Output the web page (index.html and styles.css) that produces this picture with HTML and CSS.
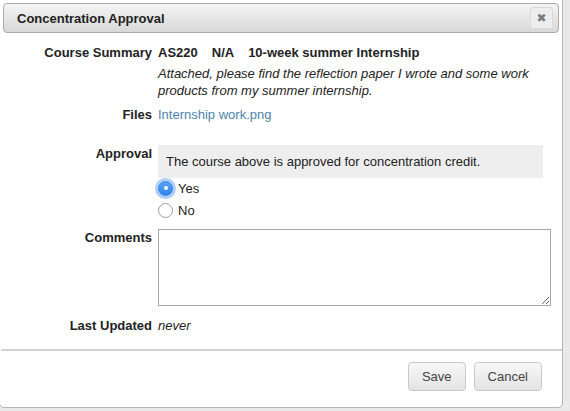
FILE: index.html
```html
<!DOCTYPE html>
<html>
<head>
<meta charset="utf-8">
<link rel="stylesheet" href="styles.css">
</head>
<body>
<div class="dialog">
  <div class="titlebar">
    <span class="title">Concentration Approval</span>
    <button class="close" type="button">&#10006;</button>
  </div>
  <div class="content">
    <div class="row r-summary">
      <div class="label">Course Summary</div>
      <div class="value">
        <div class="course"><span>AS220</span><span>N/A</span><span>10-week summer Internship</span></div>
        <div class="desc">Attached, please find the reflection paper I wrote and some work products from my summer internship.</div>
      </div>
    </div>
    <div class="row r-files">
      <div class="label">Files</div>
      <div class="value"><a class="file" href="#">Internship work.png</a></div>
    </div>
    <div class="row r-approval">
      <div class="label">Approval</div>
      <div class="value">
        <div class="notice">The course above is approved for concentration credit.</div>
        <div class="radios">
          <label class="radio"><span class="dot on"></span>Yes</label>
          <label class="radio"><span class="dot"></span>No</label>
        </div>
      </div>
    </div>
    <div class="row r-comments">
      <div class="label">Comments</div>
      <div class="value"><textarea class="comments"></textarea></div>
    </div>
    <div class="row r-updated">
      <div class="label">Last Updated</div>
      <div class="value"><em>never</em></div>
    </div>
  </div>
  <div class="footer">
    <button class="btn" type="button">Save</button>
    <button class="btn" type="button">Cancel</button>
  </div>
</div>
</body>
</html>
```
FILE: styles.css
```css
html, body {
  margin: 0;
  padding: 0;
}
body {
  background: #e9e9e9;
  font-family: "Liberation Sans", Arial, sans-serif;
  font-size: 13px;
  color: #222;
  width: 570px;
  height: 411px;
  overflow: hidden;
}
.dialog {
  box-sizing: border-box;
  width: 564px;
  height: 409px;
  margin-top: -1px;
  margin-left: -1px;
  background: #fff;
  border: 1px solid #b5b5b5;
  border-radius: 0 0 5px 5px;
  padding: 3px 2px 0 3px;
  display: flex;
  flex-direction: column;
}
.titlebar {
  box-sizing: border-box;
  height: 30px;
  margin-right: 1px;
  border: 1px solid #aaa;
  border-radius: 4px;
  background: linear-gradient(#f4f4f4, #d8d8d8);
  display: flex;
  align-items: center;
  justify-content: space-between;
  padding: 0 5px 0 13px;
}
.title {
  font-weight: bold;
  font-size: 13px;
  color: #222;
}
.close {
  box-sizing: border-box;
  width: 23px;
  height: 22px;
  border: 1px solid #d9d9d9;
  border-radius: 3px;
  background: #ededed;
  color: #7a7a7a;
  font-size: 12px;
  line-height: 20px;
  padding: 0;
  text-align: center;
  font-family: "DejaVu Sans", sans-serif;
  font-weight: bold;
}
.content {
  padding-top: 11px;
  flex: 1;
}
.row {
  display: grid;
  grid-template-columns: 149px 1fr;
  column-gap: 6px;
  line-height: 17px;
}
.label {
  text-align: right;
  font-weight: bold;
  color: #222;
}
.value {
  padding-right: 14px;
}
.course {
  font-weight: bold;
  display: flex;
  gap: 14px;
}
.desc {
  font-style: italic;
  margin-top: 4px;
}
.r-files {
  margin-top: 7px;
}
.file {
  color: #4f82ab;
  text-decoration: none;
}
.r-approval {
  margin-top: 22px;
}
.notice {
  background: #eeeeee;
  height: 33px;
  line-height: 33px;
  padding-left: 8px;
  margin-right: 3px;
}
.radios {
  display: flex;
  flex-direction: column;
  gap: 2px;
}
.radio {
  display: flex;
  align-items: center;
  height: 20px;
  gap: 5px;
  font-size: 13px;
}
.dot {
  box-sizing: border-box;
  width: 15px;
  height: 15px;
  border-radius: 50%;
  border: 1px solid #9a9a9a;
  background: #fff;
  position: relative;
}
.dot.on {
  border: 1px solid #2a78e4;
  background: linear-gradient(#5aa3f7, #2e84ee);
  box-shadow: 0 0 0 3px rgba(110, 165, 240, 0.55);
}
.dot.on::after {
  content: "";
  position: absolute;
  left: 4.5px;
  top: 4.5px;
  width: 4px;
  height: 4px;
  border-radius: 50%;
  background: #fff;
}
.r-comments {
  margin-top: 9px;
}
.comments {
  display: block;
  box-sizing: border-box;
  width: 393px;
  height: 77px;
  border: 1px solid #a6a6a6;
  margin: 0;
  padding: 2px;
  font-family: inherit;
}
.r-updated {
  margin-top: 11px;
}
.r-updated em {
  font-style: italic;
}
.footer {
  border-top: 2px solid #d4d4d4;
  margin-left: -2px;
  margin-right: -2px;
  height: 58px;
  box-sizing: border-box;
  display: flex;
  justify-content: flex-end;
  align-items: flex-start;
  gap: 8px;
  padding: 11px 20px 0 0;
}
.btn {
  box-sizing: border-box;
  height: 29px;
  border: 1px solid #c8c8c8;
  border-radius: 4px;
  background: linear-gradient(#f7f7f7, #e4e4e4);
  color: #444;
  font-family: "Liberation Sans", Arial, sans-serif;
  font-size: 13px;
  padding: 0 13px;
}
```
